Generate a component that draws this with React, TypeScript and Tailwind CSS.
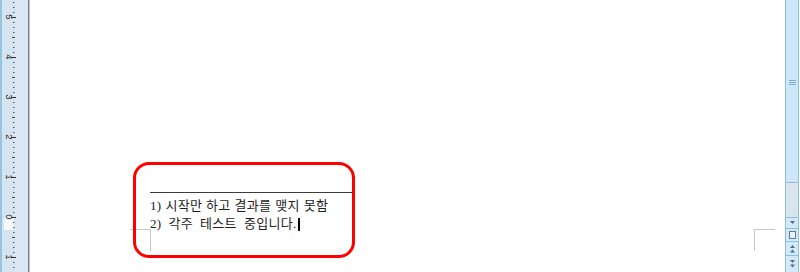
import React from 'react';

const labels = ['5', '4', '3', '2', '1', '0', '1'];

function Ruler() {
  const ticks: React.ReactNode[] = [];
  for (let y = 2; y < 272; y += 5) {
    const rel = (y - 17 + 400) % 40;
    if (rel === 0) {
      ticks.push(<rect key={y} x={11} y={y} width={5} height={1} fill="#333" />);
    } else if (rel === 20) {
      ticks.push(<rect key={y} x={12} y={y} width={3} height={1} fill="#444" />);
    } else {
      ticks.push(<rect key={y} x={13} y={y} width={1.5} height={1} fill="#555" />);
    }
  }
  return (
    <svg width="28" height="272" className="block shrink-0">
      <rect x="0" y="0" width="28" height="272" fill="#d4e4f1" />
      <rect x="0" y="0" width="2" height="272" fill="#98c3e3" />
      <rect x="15" y="0" width="13" height="272" fill="#d9e8f4" />
      <rect x="4" y="218" width="10" height="12" fill="#f4f9fd" />
      {ticks}
      {labels.map((l, i) => {
        const y = 17 + i * 40;
        return (
          <text
            key={i}
            x={0}
            y={0}
            transform={`translate(5.5 ${y}) rotate(90)`}
            fontSize="9.5"
            fontFamily="'Liberation Sans', sans-serif"
            fill="#2a2a2a"
            textAnchor="middle"
          >
            {l}
          </text>
        );
      })}
    </svg>
  );
}

function Arrow({ dir, double }: { dir: 'up' | 'down'; double?: boolean }) {
  const tri = dir === 'down' ? 'M0 0 L5 0 L2.5 3 Z' : 'M0 3 L5 3 L2.5 0 Z';
  return (
    <svg width="5" height={double ? 8 : 4} viewBox={double ? '0 0 5 8' : '0 0 5 4'}>
      <path d={tri} fill="#4d6f8c" />
      {double && <path d={tri} transform="translate(0 4.5)" fill="#4d6f8c" />}
    </svg>
  );
}

function Scrollbar() {
  return (
    <div className="flex w-[14px] shrink-0 flex-col border-x border-[#8ebfe2] bg-[#cfe6f4]">
      <div className="flex h-[183px] items-center justify-center border-b border-[#8ebfe2] bg-[#cde7f6]">
        <div className="mt-[-17px] flex flex-col gap-[1px]">
          <div className="h-px w-[7px] bg-[#80afd2]" />
          <div className="h-px w-[7px] bg-[#80afd2]" />
          <div className="h-px w-[7px] bg-[#80afd2]" />
        </div>
      </div>
      <div className="h-[34px] bg-[#d9e5ed]" />
      <div className="flex h-[12px] items-center justify-center border-y border-[#8ebfe2] bg-[#d3e9f6]">
        <Arrow dir="down" />
      </div>
      <div className="flex h-[13px] items-center justify-center border-b border-[#8ebfe2] bg-[#d3e9f6]">
        <div className="h-[8px] w-[7px] border border-[#5a7d9a] bg-[#e6f2fa]" />
      </div>
      <div className="flex h-[14px] items-center justify-center border-b border-[#8ebfe2] bg-[#d3e9f6]">
        <Arrow dir="up" double />
      </div>
      <div className="flex flex-1 items-center justify-center bg-[#d3e9f6]">
        <Arrow dir="down" double />
      </div>
    </div>
  );
}

export default function App() {
  return (
    <div className="flex h-[272px] w-[800px] overflow-hidden bg-white">
      <Ruler />
      <div className="w-px shrink-0 bg-[#7c7c7c]" />
      <div className="w-px shrink-0 bg-[#b9c4cc]" />

      {/* page */}
      <div className="relative flex-1 bg-white pl-[120px] pt-[192px]">
        {/* corner marks */}
        <div className="absolute left-[100px] top-[229px] h-[22px] w-[21px] border-r border-t border-[#c8c8c8]" />
        <div className="absolute left-[724px] top-[229px] h-[22px] w-[21px] border-l border-t border-[#c8c8c8]" />

        {/* footnote area */}
        <div className="relative">
          <div className="h-px w-[203px] bg-[#3c3c3c]" />
          <div
            className="mt-[4px] text-[13px] leading-[18px] tracking-[0.3px] text-[#1e1e1e]"
            style={{ fontFamily: "'Liberation Serif', 'Noto Sans CJK KR', serif" }}
          >
            <p className="whitespace-nowrap [word-spacing:0.4px]">1) 시작만 하고 결과를 맺지 못함</p>
            <p className="flex items-center whitespace-nowrap [word-spacing:3.5px]">
              2) 각주 테스트 중입니다.
              <span className="ml-[2px] inline-block h-[13px] w-[2px] bg-black" />
            </p>
          </div>
        </div>

        {/* annotation */}
        <div className="absolute left-[103px] top-[162px] h-[96px] w-[222px] rounded-[16px] border-[3px] border-[#ff0000]" />
      </div>

      <Scrollbar />
      <div className="w-px shrink-0 bg-white" />
    </div>
  );
}
